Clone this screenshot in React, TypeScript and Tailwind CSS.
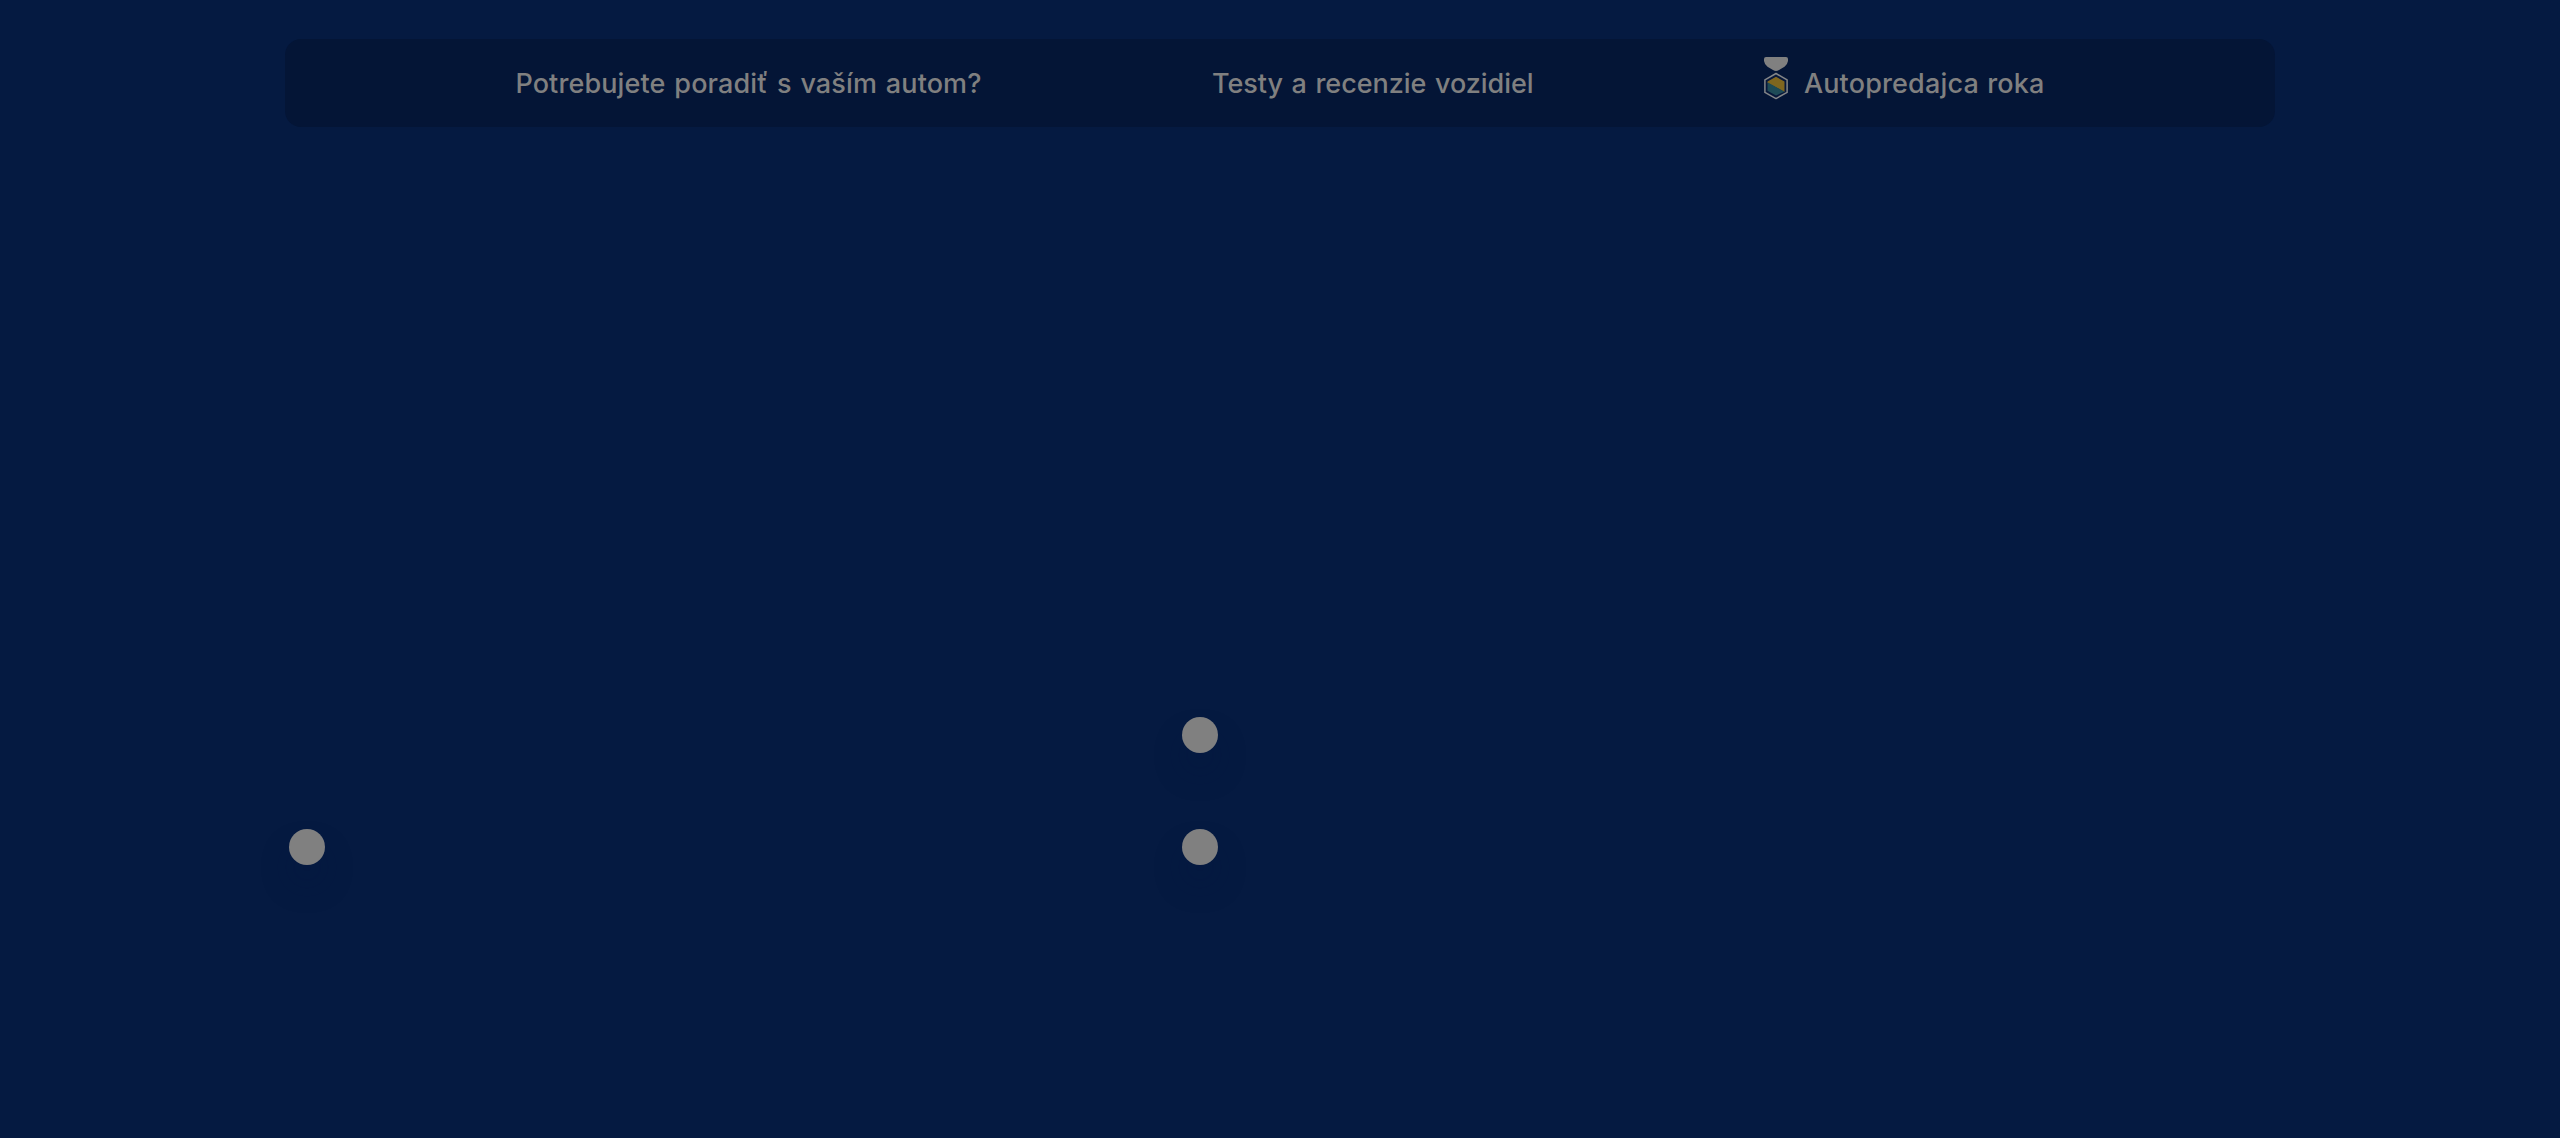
function Medal() {
  return (
    <svg width="24" height="44" viewBox="0 0 24 44" className="-mt-2.5 mr-4 shrink-0" aria-hidden="true">
      <path d="M2 0H22Q24 0 24 2V4Q23.500 7.500 20.500 9.800L15 13Q12 14.800 9 13L3.500 9.800Q.5 7.500 0 4V2Q0 0 2 0Z" fill="#808080" />
      <path d="M12 16.500 23.100 22.800V35.400L12 41.600 .9 35.400V22.800Z" fill="#07173a" stroke="#848688" strokeWidth="1.500" strokeLinejoin="round" />
      <path d="M3.500 26 3.500 24.500 12 19.800 20.500 24.500V35Z" fill="#80661f" />
      <path d="M3.500 25.200 20.500 34.700 12 38.500 3.500 33.700Z" fill="#1e4b57" />
    </svg>
  );
}

function Dot() {
  return <span className="block size-9 rounded-full bg-[#808080] shadow-[0_20px_30px_rgba(0,24,64,0.3)]" />;
}

export default function App() {
  return (
    <div className="h-[1138px] w-full overflow-hidden bg-[#051a41] pt-[39px] font-['Inter',sans-serif]">
      <nav className="mx-auto flex h-[88px] w-[1990px] items-center justify-evenly rounded-2xl bg-[#041536] pt-0.5 text-[27px] font-medium text-[#808080]">
        <a className="tracking-[0.12px] [word-spacing:1.5px]">Potrebujete poradiť s vaším autom?</a>
        <a className="tracking-[-0.05px] [word-spacing:1.5px]">Testy a recenzie vozidiel</a>
        <a className="flex items-center tracking-[0.16px] [word-spacing:1px]">
          <Medal />
          Autopredajca roka
        </a>
      </nav>
      <div className="mx-auto mt-[590px] grid w-[1982px] grid-cols-[893px_1fr] items-end">
        <Dot />
        <div className="flex flex-col gap-[76px]">
          <Dot />
          <Dot />
        </div>
      </div>
    </div>
  );
}
